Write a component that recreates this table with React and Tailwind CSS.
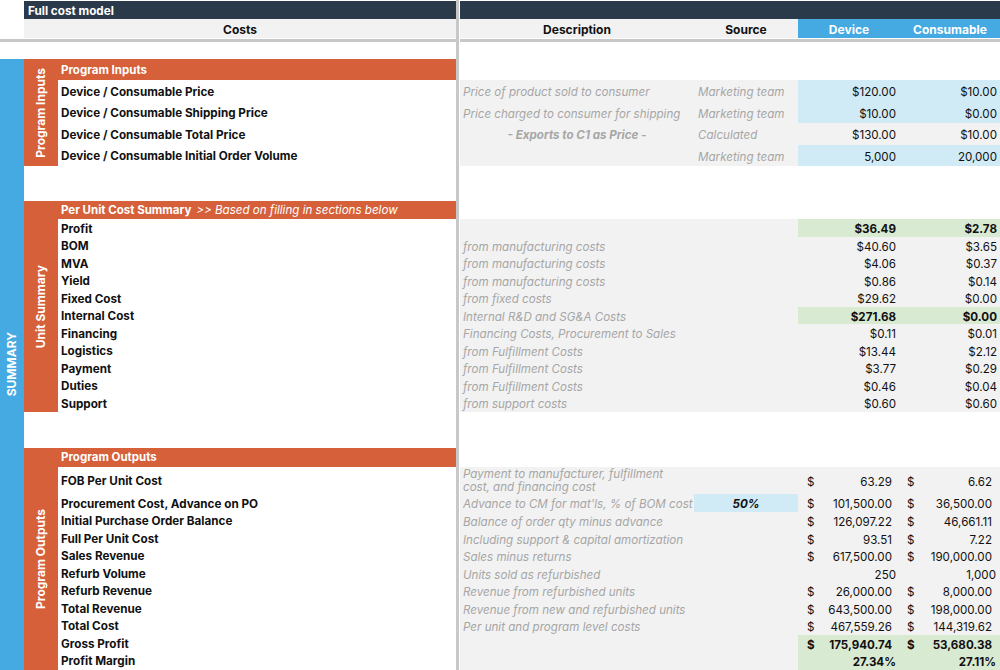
import React from "react";

const inputs = [
  { label: "Device / Consumable Price", desc: "Price of product sold to consumer", src: "Marketing team", d: "$120.00", c: "$10.00", blue: true },
  { label: "Device / Consumable Shipping Price", desc: "Price charged to consumer for shipping", src: "Marketing team", d: "$10.00", c: "$0.00", blue: true },
  { label: "Device / Consumable Total Price", desc: "- Exports to C1 as Price -", center: true, src: "Calculated", d: "$130.00", c: "$10.00", blue: false },
  { label: "Device / Consumable Initial Order Volume", desc: "", src: "Marketing team", d: "5,000", c: "20,000", blue: true },
];

const unit = [
  { label: "Profit", desc: "", d: "$36.49", c: "$2.78", green: true },
  { label: "BOM", desc: "from manufacturing costs", d: "$40.60", c: "$3.65" },
  { label: "MVA", desc: "from manufacturing costs", d: "$4.06", c: "$0.37" },
  { label: "Yield", desc: "from manufacturing costs", d: "$0.86", c: "$0.14" },
  { label: "Fixed Cost", desc: "from fixed costs", d: "$29.62", c: "$0.00" },
  { label: "Internal Cost", desc: "Internal R&D and SG&A Costs", d: "$271.68", c: "$0.00", green: true },
  { label: "Financing", desc: "Financing Costs, Procurement to Sales", d: "$0.11", c: "$0.01" },
  { label: "Logistics", desc: "from Fulfillment Costs", d: "$13.44", c: "$2.12" },
  { label: "Payment", desc: "from Fulfillment Costs", d: "$3.77", c: "$0.29" },
  { label: "Duties", desc: "from Fulfillment Costs", d: "$0.46", c: "$0.04" },
  { label: "Support", desc: "from support costs", d: "$0.60", c: "$0.60" },
];

const outputs = [
  { label: "Initial Purchase Order Balance", desc: "Balance of order qty minus advance", d: "126,097.22", c: "46,661.11", cur: true },
  { label: "Full Per Unit Cost", desc: "Including support & capital amortization", d: "93.51", c: "7.22", cur: true },
  { label: "Sales Revenue", desc: "Sales minus returns", d: "617,500.00", c: "190,000.00", cur: true },
  { label: "Refurb Volume", desc: "Units sold as refurbished", d: "250", c: "1,000", cur: false },
  { label: "Refurb Revenue", desc: "Revenue from refurbished units", d: "26,000.00", c: "8,000.00", cur: true },
  { label: "Total Revenue", desc: "Revenue from new and refurbished units", d: "643,500.00", c: "198,000.00", cur: true },
  { label: "Total Cost", desc: "Per unit and program level costs", d: "467,559.26", c: "144,319.62", cur: true },
  { label: "Gross Profit", desc: "", d: "175,940.74", c: "53,680.38", cur: true, green: true },
  { label: "Profit Margin", desc: "", d: "27.34%", c: "27.11%", cur: false, green: true },
];

function SideLabel({ text }) {
  return (
    <div className="w-[34px] shrink-0 bg-[#d5603a] flex items-center justify-center">
      <span className="[writing-mode:vertical-rl] rotate-180 text-white font-bold text-[12px] leading-none whitespace-nowrap">
        {text}
      </span>
    </div>
  );
}

function Label({ text, h }) {
  return (
    <div className={`${h} flex items-center pt-[4px] pl-[3px] text-[11.7px] font-bold text-[#111] whitespace-nowrap`}>
      {text}
    </div>
  );
}

function AcctCell({ v, cur, green, dev }) {
  const bg = green ? "bg-[#d9ead3] font-bold" : "";
  if (!cur) {
    return (
      <div className={`${dev ? "w-[102px] pr-[4px]" : "flex-1 pr-[4px]"} ${bg} flex items-center justify-end pt-[4px]`}>
        {v}
      </div>
    );
  }
  return (
    <div className={`${dev ? "w-[102px] pl-[9px] pr-[8px]" : "flex-1 pl-[7px] pr-[8px]"} ${bg} flex items-center justify-between pt-[4px]`}>
      <span>$</span>
      <span>{v}</span>
    </div>
  );
}

export default function App() {
  return (
    <div className="w-[1000px] h-[670px] overflow-hidden bg-white flex text-[#111]" style={{ fontFamily: "Inter, 'Liberation Sans', sans-serif" }}>
      {/* LEFT */}
      <div className="w-[456px] shrink-0 flex flex-col">
        <div className="h-[1px]" />
        <div className="h-[18px] flex">
          <div className="w-[24px]" />
          <div className="flex-1 bg-[#2b3a4a] text-white font-bold text-[11.7px] pl-[4px] pt-[4px] flex items-center">Full cost model</div>
        </div>
        <div className="h-[19px] flex">
          <div className="w-[24px]" />
          <div className="flex-1 bg-[#f2f2f2] font-bold text-[12px] pt-[2px] flex items-center justify-center">Costs</div>
        </div>
        <div className="h-[1px]" />
        <div className="h-[3px] bg-[#c8c8c8]" />
        <div className="flex-1 flex">
          <div className="w-[24px] shrink-0 flex flex-col">
            <div className="h-[17px]" />
            <div className="flex-1 bg-[#45a9e2] flex items-center justify-center">
              <span className="[writing-mode:vertical-rl] rotate-180 text-white font-bold text-[12px] leading-none">SUMMARY</span>
            </div>
          </div>
          <div className="flex-1 flex flex-col">
            <div className="h-[17px]" />
            {/* Program Inputs */}
            <div className="flex">
              <SideLabel text="Program Inputs" />
              <div className="flex-1 flex flex-col">
                <div className="h-[21px] bg-[#d5603a] text-white font-bold text-[11.5px] pl-[3px] pt-[2px] flex items-center">Program Inputs</div>
                {inputs.map((r) => (
                  <Label key={r.label} text={r.label} h="h-[21.5px]" />
                ))}
              </div>
            </div>
            <div className="h-[35px]" />
            {/* Unit Summary */}
            <div className="flex">
              <SideLabel text="Unit Summary" />
              <div className="flex-1 flex flex-col">
                <div className="h-[18px] bg-[#d5603a] text-white text-[11.5px] pl-[3px] pt-[2px] flex items-center whitespace-nowrap">
                  <span className="font-bold">Per Unit Cost Summary</span>
                  <span className="italic ml-[5px] text-[11.6px]">&gt;&gt; Based on filling in sections below</span>
                </div>
                {unit.map((r) => (
                  <Label key={r.label} text={r.label} h="h-[17.5px]" />
                ))}
              </div>
            </div>
            <div className="h-[36px]" />
            {/* Program Outputs */}
            <div className="flex flex-1">
              <SideLabel text="Program Outputs" />
              <div className="flex-1 flex flex-col">
                <div className="h-[19px] bg-[#d5603a] text-white font-bold text-[11.5px] pl-[3px] pt-[2px] flex items-center">Program Outputs</div>
                <Label text="FOB Per Unit Cost" h="h-[27px]" />
                <Label text="Procurement Cost, Advance on PO" h="h-[18px]" />
                {outputs.map((r) => (
                  <Label key={r.label} text={r.label} h="h-[17.5px]" />
                ))}
              </div>
            </div>
          </div>
        </div>
      </div>

      {/* DIVIDER */}
      <div className="w-[3px] shrink-0 bg-[#c8c8c8]" />
      <div className="w-[1px] shrink-0" />

      {/* RIGHT */}
      <div className="flex-1 flex flex-col text-[11.6px]">
        <div className="h-[1px]" />
        <div className="h-[18px] bg-[#2b3a4a]" />
        <div className="h-[19px] flex font-bold text-[12px] pt-[2px] bg-[#f2f2f2]">
          <div className="w-[234px] flex items-center justify-center">Description</div>
          <div className="w-[104px] flex items-center justify-center">Source</div>
          <div className="w-[102px] -mt-[2px] pt-[2px] bg-[#45a9e2] text-white flex items-center justify-center">Device</div>
          <div className="flex-1 -mt-[2px] pt-[2px] bg-[#45a9e2] text-white flex items-center justify-center">Consumable</div>
        </div>
        <div className="h-[1px]" />
        <div className="h-[3px] bg-[#c8c8c8]" />

        {/* Inputs */}
        <div className="h-[38px]" />
        {inputs.map((r) => (
          <div key={r.label} className="h-[21.5px] flex bg-[#f2f2f2]">
            <div className={`w-[234px] flex items-center pt-[4px] italic text-[#a6a6a6] whitespace-nowrap ${r.center ? "justify-center font-bold" : "pl-[3px]"}`}>{r.desc}</div>
            <div className="w-[104px] pl-[4px] pt-[4px] flex items-center italic text-[#a6a6a6] whitespace-nowrap">{r.src}</div>
            <div className={`w-[102px] pr-[4px] pt-[4px] flex items-center justify-end ${r.blue ? "bg-[#d0ebf5]" : ""}`}>{r.d}</div>
            <div className={`flex-1 pr-[3px] pt-[4px] flex items-center justify-end ${r.blue ? "bg-[#d0ebf5]" : ""}`}>{r.c}</div>
          </div>
        ))}

        {/* Unit summary */}
        <div className="h-[53px]" />
        {unit.map((r) => (
          <div key={r.label} className="h-[17.5px] flex bg-[#f2f2f2]">
            <div className="w-[234px] pl-[3px] pt-[4px] flex items-center italic text-[#a6a6a6] whitespace-nowrap">{r.desc}</div>
            <div className="w-[104px]" />
            <div className={`w-[102px] pr-[4px] pt-[4px] flex items-center justify-end ${r.green ? "bg-[#d9ead3] font-bold" : ""}`}>{r.d}</div>
            <div className={`flex-1 pr-[3px] pt-[4px] flex items-center justify-end ${r.green ? "bg-[#d9ead3] font-bold" : ""}`}>{r.c}</div>
          </div>
        ))}

        {/* Outputs */}
        <div className="h-[55.5px]" />
        <div className="h-[27px] flex bg-[#f2f2f2]">
          <div className="w-[234px] pl-[3px] flex flex-col justify-center italic text-[#a6a6a6] leading-[13px]">
            <span>Payment to manufacturer, fulfillment</span>
            <span>cost, and financing cost</span>
          </div>
          <div className="w-[104px]" />
          <AcctCell v="63.29" cur dev />
          <AcctCell v="6.62" cur />
        </div>
        <div className="h-[18px] flex bg-[#f2f2f2]">
          <div className="w-[234px] pl-[3px] pt-[4px] flex items-center italic text-[#a6a6a6] whitespace-nowrap">Advance to CM for mat'ls, % of BOM cost</div>
          <div className="w-[104px] bg-[#d0ebf5] pt-[4px] flex items-center justify-center font-bold italic">50%</div>
          <AcctCell v="101,500.00" cur dev />
          <AcctCell v="36,500.00" cur />
        </div>
        {outputs.map((r) => (
          <div key={r.label} className="h-[17.5px] flex bg-[#f2f2f2]">
            <div className="w-[234px] pl-[3px] pt-[4px] flex items-center italic text-[#a6a6a6] whitespace-nowrap">{r.desc}</div>
            <div className="w-[104px]" />
            <AcctCell v={r.d} cur={r.cur} green={r.green} dev />
            <AcctCell v={r.c} cur={r.cur} green={r.green} />
          </div>
        ))}
        <div className="flex-1 bg-[#f2f2f2]" />
      </div>
    </div>
  );
}
